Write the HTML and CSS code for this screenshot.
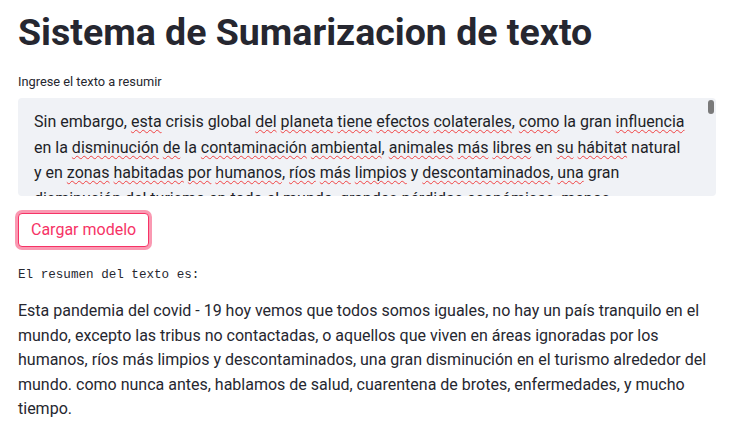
FILE: index.html
```html
<!DOCTYPE html>
<html lang="es">
<head>
<meta charset="utf-8">
<title>Sistema de Sumarizacion de texto</title>
<link rel="stylesheet" href="styles.css">
</head>
<body>
<main class="block">
  <h1 class="title">Sistema de Sumarizacion de texto</h1>
  <div class="field">
    <label class="label">Ingrese el texto a resumir</label>
    <div class="textarea">
      <div class="ta-text">Sin embargo, <span class="sp">esta</span> crisis global <span class="sp">del</span> <span class="sp">planeta</span> <span class="sp">tiene</span> <span class="sp">efectos</span> <span class="sp">colaterales</span>, <span class="sp">como</span> la gran <span class="sp">influencia</span> en la <span class="sp">disminución</span> <span class="sp">de</span> la <span class="sp">contaminación</span> <span class="sp">ambiental</span>, <span class="sp">animales</span> <span class="sp">más</span> <span class="sp">libres</span> en <span class="sp">su</span> <span class="sp">hábitat</span> natural y en <span class="sp">zonas</span> <span class="sp">habitadas</span> <span class="sp">por</span> <span class="sp">humanos</span>, <span class="sp">ríos</span> <span class="sp">más</span> <span class="sp">limpios</span> y <span class="sp">descontaminados</span>, <span class="sp">una</span> gran <span class="sp">disminución</span> <span class="sp">del</span> <span class="sp">turismo</span> en <span class="sp">todo</span> el <span class="sp">mundo</span>, <span class="sp">grandes</span> <span class="sp">pérdidas</span> <span class="sp">económicas</span>, <span class="sp">menos</span> <span class="sp">contaminación</span> y <span class="sp">muchos</span> <span class="sp">cambios</span> en <span class="sp">nuestra</span> forma <span class="sp">de</span> <span class="sp">vivir</span>.</div>
      <span class="thumb"></span>
    </div>
  </div>
  <div class="actions">
    <button class="btn" type="button">Cargar modelo</button>
  </div>
  <pre class="mono">El resumen del texto es:</pre>
  <p class="summary">Esta pandemia del covid - 19 hoy vemos que todos somos iguales, no hay un país tranquilo en el mundo, excepto las tribus no contactadas, o aquellos que viven en áreas ignoradas por los humanos, ríos más limpios y descontaminados, una gran disminución en el turismo alrededor del mundo. como nunca antes, hablamos de salud, cuarentena de brotes, enfermedades, y mucho tiempo.</p>
</main>
</body>
</html>
```

FILE: styles.css
```css
* { box-sizing: border-box; }

html, body {
  margin: 0;
  padding: 0;
  background: #ffffff;
}

body {
  font-family: Roboto, "Noto Sans", sans-serif;
  color: rgb(38, 39, 48);
  width: 746px;
  height: 443px;
  overflow: hidden;
}

.block {
  width: 698px;
  margin-left: 18px;
  display: flex;
  flex-direction: column;
}

.title {
  margin: 0;
  padding-top: 6px;
  font-size: 37.5px;
  line-height: 52px;
  font-weight: 700;
  letter-spacing: 0;
}

.field {
  margin-top: 15px;
  display: flex;
  flex-direction: column;
}

.label {
  font-size: 12.8px;
  line-height: 18px;
  margin-bottom: 7px;
}

.textarea {
  position: relative;
  height: 98px;
  background: rgb(240, 242, 246);
  border-radius: 4px;
  overflow: hidden;
}

.ta-text {
  padding: 11px 28px 0 16px;
  font-size: 16px;
  line-height: 25.6px;
  color: rgb(30, 31, 40);
}

.sp {
  text-decoration: underline wavy rgba(240, 40, 40, 0.85);
  text-decoration-thickness: 1px;
  text-underline-offset: 2px;
  text-decoration-skip-ink: none;
}

.thumb {
  position: absolute;
  top: 2px;
  right: 2px;
  width: 6px;
  height: 14px;
  border-radius: 3px;
  background: #7a7a7a;
}

.actions {
  margin-top: 17px;
  display: flex;
}

.btn {
  font-family: inherit;
  font-size: 16px;
  line-height: 22px;
  color: rgb(246, 51, 102);
  background: #fff;
  border: 1px solid rgb(246, 51, 102);
  border-radius: 4px;
  padding: 5px 12px;
  box-shadow: 0 0 0 3px rgba(246, 51, 102, 0.5);
  margin-left: 0;
}

.mono {
  margin: 19px 0 0;
  font-family: "Liberation Mono", "DejaVu Sans Mono", monospace;
  font-size: 12.6px;
  line-height: 18px;
}

.summary {
  margin: 15px 0 0;
  font-size: 16px;
  line-height: 24.6px;
}
```
